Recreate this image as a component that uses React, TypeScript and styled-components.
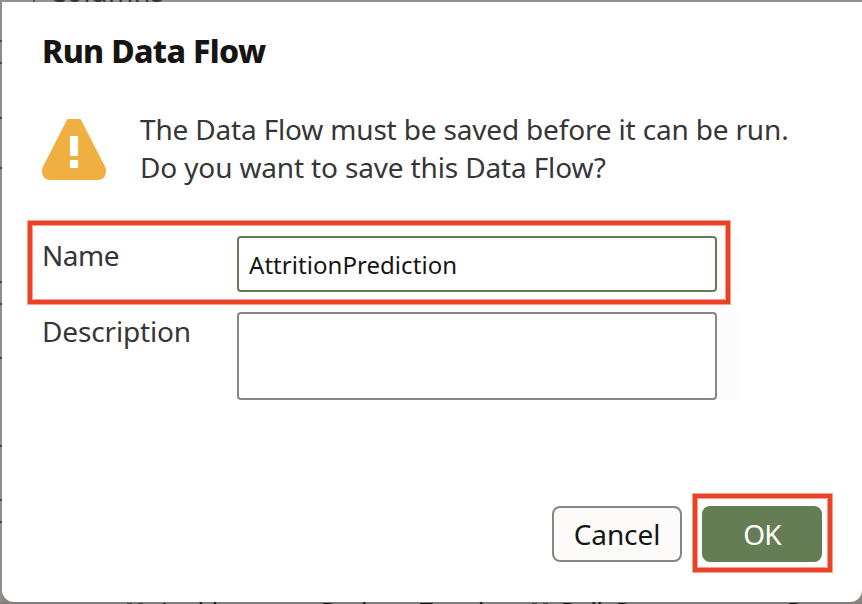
import React from "react";
import styled, { createGlobalStyle } from "styled-components";

const GlobalStyle = createGlobalStyle`
  * { box-sizing: border-box; }
  body { margin: 0; overflow: hidden; font-family: "Noto Sans", "Open Sans", sans-serif; }
`;

const Page = styled.div`
  display: grid;
  grid-template: 2px 600px 2px / 2px 860px;
  width: 862px;
  height: 604px;
  overflow: hidden;
  background: #8a8886;
`;

const TopStrip = styled.div`
  grid-column: 1 / 3;
  display: flex;
  overflow: hidden;
  background: #929090;
  padding-left: 33px;
`;

const Divider = styled.div`
  width: 2px;
  height: 2px;
  margin-right: 14px;
  background: #555;
`;

const TopText = styled.span`
  font-size: 27px;
  line-height: 38px;
  margin-top: -27px;
  letter-spacing: 0.5px;
  color: #333;
  white-space: pre;
`;

const LeftStrip = styled.div`
  position: relative;
  background: #8d8d8d;
`;

const Rule = styled.div<{ $y: number }>`
  position: absolute;
  left: 0;
  top: ${(p) => p.$y}px;
  width: 2px;
  height: 2px;
  background: #484848;
`;

const BottomStrip = styled.div`
  grid-column: 1 / 3;
  position: relative;
  height: 2px;
  overflow: hidden;
  background: #807d7b;
`;

const Column = styled.span<{ $x: number }>`
  position: absolute;
  left: ${(p) => p.$x}px;
  top: -7px;
  font-size: 23px;
  line-height: 32px;
  color: #111;
  white-space: pre;
`;

const TypeMark = styled.span<{ $x: number }>`
  position: absolute;
  left: ${(p) => p.$x}px;
  top: 1px;
  width: 16px;
  height: 1px;
  border: solid #3c3b3a;
  border-width: 0 5px;
`;

const DialogShell = styled.div`
  background: #878583;
`;

const Dialog = styled.main`
  position: relative;
  height: 600px;
  padding: 30px 40px 40px;
  display: flex;
  flex-direction: column;
  background: #fff;
  border-radius: 0 0 12px 12px;
`;

const Title = styled.h1`
  margin: -1px 0 1px;
  height: 40px;
  font-size: 32px;
  line-height: 40px;
  font-weight: 800;
  letter-spacing: -0.65px;
  color: #161513;
  white-space: nowrap;
`;

const Notice = styled.div`
  display: flex;
  margin-top: 38px;
  height: 76px;
`;

const WarningIcon = styled.svg`
  width: 64px;
  height: 62px;
  margin: 8px 34px 0 0;
`;

const Message = styled.p`
  margin: 0;
  font-size: 28px;
  line-height: 38px;
  color: #363636;
  white-space: nowrap;
`;

const Line = styled.span<{ $spacing: number }>`
  display: block;
  letter-spacing: ${(p) => p.$spacing}px;
`;

const Form = styled.form`
  display: grid;
  grid-template-columns: 195px 504px;
  row-gap: 20px;
  margin-top: 50px;
`;

const Label = styled.label<{ $spacing: number }>`
  margin-top: -1px;
  font-size: 28px;
  line-height: 40px;
  letter-spacing: ${(p) => p.$spacing}px;
  color: #363636;
`;

const Field = styled.div`
  display: flex;
  background: #fcfcfc;
  border-radius: 4px;
`;

const NameInput = styled.input`
  width: 480px;
  height: 56px;
  padding: 1px 10px 0;
  border: 2px solid #647c52;
  border-radius: 4px;
  outline: 0;
  background: #fff;
  color: #161513;
  font: 24px "Noto Sans", sans-serif;
  letter-spacing: 0.05px;
`;

const DescriptionInput = styled.textarea`
  display: block;
  width: 480px;
  height: 88px;
  border: 2px solid #8b8581;
  border-radius: 4px;
  resize: none;
  outline: 0;
  background: #fff;
`;

const Actions = styled.footer`
  display: flex;
  justify-content: flex-end;
  gap: 20px;
  margin-top: auto;
`;

const Button = styled.button<{ $primary?: boolean }>`
  width: ${(p) => (p.$primary ? 120 : 130)}px;
  height: 56px;
  padding: 0;
  border: 2px solid ${(p) => (p.$primary ? "#657d54" : "#8b8581")};
  border-radius: 8px;
  background: ${(p) => (p.$primary ? "#657d54" : "#fcfbfa")};
  color: ${(p) => (p.$primary ? "#fff" : "#161513")};
  font: 28px "Noto Sans", sans-serif;
  letter-spacing: ${(p) => (p.$primary ? -0.8 : -0.1)}px;
`;

const Highlight = styled.div<{ $x: number; $y: number; $w: number; $h: number }>`
  position: absolute;
  left: ${(p) => p.$x}px;
  top: ${(p) => p.$y}px;
  width: ${(p) => p.$w}px;
  height: ${(p) => p.$h}px;
  border: 4px solid #eb4226;
  box-shadow: 0 0 0 1px #eb422680, inset 0 0 0 1px #eb422680;
  pointer-events: none;
`;

const rules = [38, 60, 115, 165, 279, 301, 355, 443, 497, 519];

const columns = [
  { x: 157, name: "Attrition" },
  { x: 321, name: "Business" },
  { x: 420, name: "Travel" },
  { x: 561, name: "Daily" },
  { x: 616, name: "Rate" },
  { x: 787, name: "Depar" },
];

const numericMarks = [127, 532];

export default function App() {
  return (
    <>
      <GlobalStyle />
      <Page>
        <TopStrip>
          <Divider />
          <TopText>Columns</TopText>
        </TopStrip>
        <LeftStrip>
          {rules.map((y) => (
            <Rule key={y} $y={y} />
          ))}
        </LeftStrip>
        <DialogShell>
          <Dialog role="dialog">
            <Title>Run Data Flow</Title>
            <Notice>
              <WarningIcon viewBox="0 0 64 62">
                <path
                  fill="#efb041"
                  d="M26 1H38Q38.6 1 39 1.8L63.2 49Q64.5 51.5 64 54.5Q62.7 62 56 62H8Q1.3 62 0 54.5Q-.3 51.5 .8 49L25 1.8Q25.4 1 26 1Z"
                />
                <path fill="#fff" d="M28 18h8v20h-8zM28 42h8v8h-8z" />
              </WarningIcon>
              <Message>
                <Line $spacing={-0.17}>The Data Flow must be saved before it can be run.</Line>
                <Line $spacing={-0.15}>Do you want to save this Data Flow?</Line>
              </Message>
            </Notice>
            <Form>
              <Label htmlFor="name" $spacing={-0.5}>Name</Label>
              <Field>
                <NameInput id="name" defaultValue="AttritionPrediction" />
              </Field>
              <Label htmlFor="description" $spacing={-0.15}>Description</Label>
              <Field>
                <DescriptionInput id="description" />
              </Field>
            </Form>
            <Actions>
              <Button>Cancel</Button>
              <Button $primary>OK</Button>
            </Actions>
            <Highlight $x={26} $y={219} $w={702} $h={83} />
            <Highlight $x={691} $y={492} $w={139} $h={78} />
          </Dialog>
        </DialogShell>
        <BottomStrip>
          {numericMarks.map((x) => (
            <TypeMark key={x} $x={x} />
          ))}
          {columns.map((c) => (
            <Column key={c.name} $x={c.x}>{c.name}</Column>
          ))}
        </BottomStrip>
      </Page>
    </>
  );
}
